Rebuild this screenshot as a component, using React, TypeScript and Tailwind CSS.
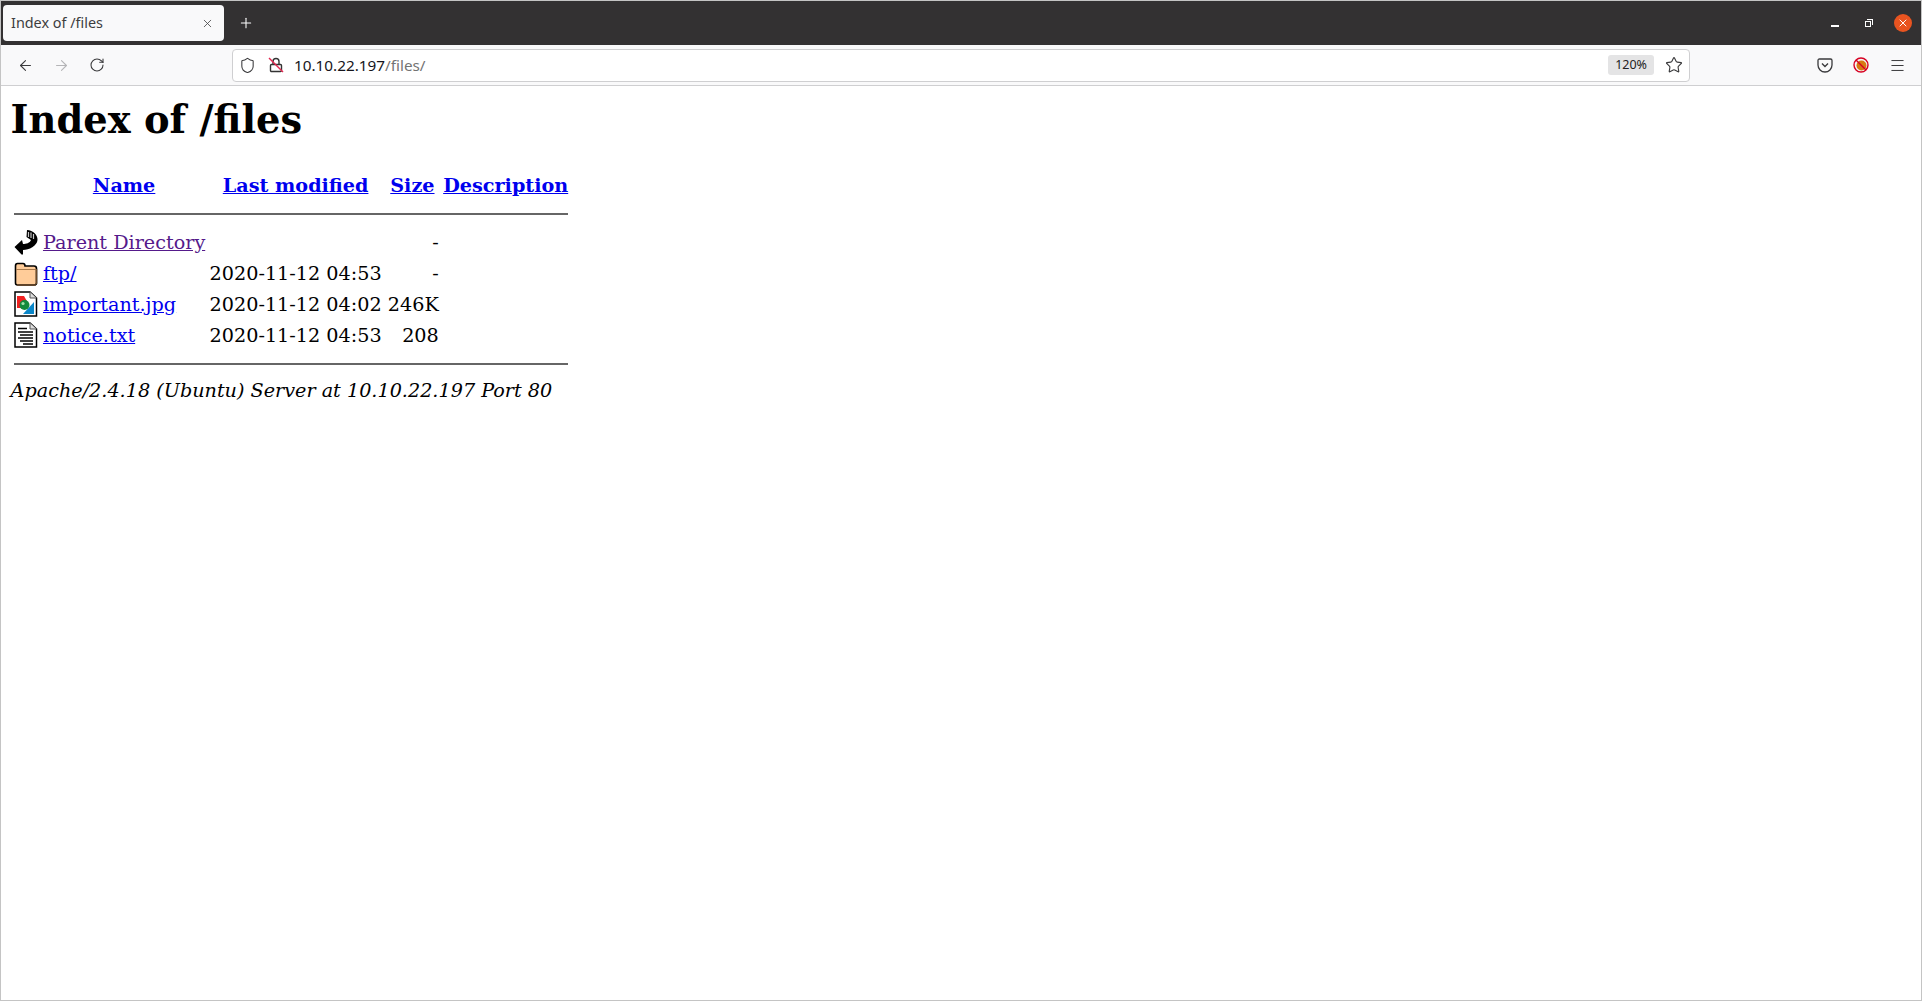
import { ArrowLeft, ArrowRight, RotateCw, Plus, X, Star, Menu, Shield } from "lucide-react";

const rows = [
  { icon: "back", name: "Parent Directory", modified: "", size: "-", visited: true },
  { icon: "folder", name: "ftp/", modified: "2020-11-12 04:53", size: "-" },
  { icon: "image", name: "important.jpg", modified: "2020-11-12 04:02", size: "246K" },
  { icon: "text", name: "notice.txt", modified: "2020-11-12 04:53", size: "208" },
];

function FileIcon({ kind }: { kind: string }) {
  if (kind === "back") {
    return (
      <svg width="24" height="26" viewBox="0 0 24 26" className="block">
        <path d="M0.5 18 L8 11 L9 15 C12 15 16 14 17 11 L12.5 8 L13 1 C19 1.5 24 6 23.5 11 C23 17 15 21 9 21 L9 25.5 L7.5 25.5 Z" fill="#000" />
        <path d="M14.5 3 L14.5 8 M17 3.5 L17 9 M19.5 5 L19.5 10" stroke="#c8c8c8" strokeWidth="1.2" />
      </svg>
    );
  }
  if (kind === "folder") {
    return (
      <svg width="24" height="26" viewBox="0 0 24 26" className="block">
        <path d="M1.5 6 Q1.5 3.5 3.5 3.5 H9 Q11 3.5 11 6 H20 Q22.5 6 22.5 8.5 V23 Q22.5 25 20 25 H3.5 Q1.5 25 1.5 23 Z" fill="#ffcc99" stroke="#000" strokeWidth="1.6" />
        <path d="M2 9.5 H22" stroke="#a87a4c" strokeWidth="1" />
        <path d="M22.5 9 V24 M3 25 H22" stroke="#6b4a2a" strokeWidth="1.4" />
      </svg>
    );
  }
  const page = (
    <>
      <path d="M1 1 H16 L22.5 7 V25 H1 Z" fill="#fff" stroke="#000" strokeWidth="1.5" />
      <path d="M16 1 V7 H22.5" fill="#ddd" stroke="#555" strokeWidth="1" />
    </>
  );
  if (kind === "image") {
    return (
      <svg width="24" height="26" viewBox="0 0 24 26" className="block">
        {page}
        <path d="M3 5 H10 L14 12 L8 17 H3 Z" fill="#f02020" />
        <path d="M20 11 V23 H9 Z" fill="#0a86c8" />
        <circle cx="10.5" cy="14" r="5" fill="#128a3c" />
        <circle cx="9" cy="12.5" r="1.6" fill="#9fe0a8" />
      </svg>
    );
  }
  return (
    <svg width="24" height="26" viewBox="0 0 24 26" className="block">
      {page}
      <path d="M4 6.5 H13 M4 10 H19 M6 13 H19 M4 16 H19 M6 19 H19 M9 22 H19" stroke="#000" strokeWidth="1.6" />
    </svg>
  );
}

export default function App() {
  return (
    <div className="w-[1922px] h-[1001px] overflow-hidden flex flex-col bg-white border border-[#c4c4c4] font-['Noto_Sans',sans-serif]">
      {/* title bar */}
      <div className="h-[44px] shrink-0 bg-[#333132] flex items-center pl-[2px] pr-[9px]">
        <div className="w-[221px] h-[36px] rounded-[4px] bg-[#f9f9fa] flex items-center pl-[8px] pr-[10px] text-[14.4px] text-[#3d3d3f]">
          <span className="flex-1">Index of /files</span>
          <X size={13} strokeWidth={1.5} className="text-[#444]" />
        </div>
        <div className="w-[44px] flex justify-center">
          <Plus size={16} strokeWidth={1.6} className="text-white" />
        </div>
        <div className="ml-auto flex items-center">
          <div className="w-[8px] h-[1.5px] bg-white mt-[6px]"></div>
          <div className="relative w-[6px] h-[6px] border border-white ml-[26px] mt-[1px]">
            <div className="absolute -top-[3px] -right-[3px] w-[6px] h-[6px] border-t border-r border-white"></div>
          </div>
          <div className="w-[18px] h-[18px] rounded-full bg-[#e95420] flex items-center justify-center ml-[23px]">
            <X size={12} strokeWidth={2} className="text-white" />
          </div>
        </div>
      </div>

      {/* toolbar */}
      <div className="h-[41px] shrink-0 bg-[#f9f9fa] border-b border-[#cfcfd1] flex items-center">
        <div className="w-[231px] flex items-center pl-[16px] gap-[19px]">
          <ArrowLeft size={17} strokeWidth={1.5} className="text-[#3a3a3c]" />
          <ArrowRight size={17} strokeWidth={1.5} className="text-[#b5b5b7]" />
          <RotateCw size={16} strokeWidth={1.6} className="text-[#3a3a3c]" />
        </div>
        <div className="w-[1458px] h-[33px] rounded-[4px] bg-white border border-[#cfcfd1] flex items-center pl-[6px] pr-[6px]">
          <Shield size={17} strokeWidth={1.5} className="text-[#3a3a3c]" />
          <svg width="16" height="16" viewBox="0 0 16 16" className="ml-[12px]">
            <path d="M5 7 V4.5 a3 3 0 0 1 6 0 V7" fill="none" stroke="#333" strokeWidth="1.4" />
            <rect x="2.5" y="7.5" width="11" height="7" rx="1" fill="none" stroke="#333" strokeWidth="1.4" />
            <path d="M1 1 L15 15" stroke="#e22850" strokeWidth="1.4" />
          </svg>
          <div className="ml-[10px] text-[15.3px] text-[#15141a]">
            10.10.22.197<span className="text-[#737373]">/files/</span>
          </div>
          <div className="ml-auto h-[20px] px-[7px] rounded-[3px] bg-[#e4e4e5] text-[12.5px] leading-[20px] text-[#222]">120%</div>
          <Star size={18} strokeWidth={1.5} className="ml-[11px] text-[#3a3a3c]" />
        </div>
        <div className="flex-1 flex items-center justify-end pr-[15px]">
          <svg width="16" height="15" viewBox="0 0 16 15">
            <path d="M2.5 1 H13.5 Q15 1 15 2.5 V7 A7 7 0 0 1 1 7 V2.5 Q1 1 2.5 1 Z" fill="none" stroke="#3a3a3c" strokeWidth="1.3" />
            <path d="M5 5.5 L8 8.5 L11 5.5" fill="none" stroke="#3a3a3c" strokeWidth="1.4" />
          </svg>
          <svg width="16" height="16" viewBox="0 0 16 16" className="ml-[20px]">
            <circle cx="8" cy="8" r="7" fill="#f6f6f6" stroke="#d70022" strokeWidth="1.4" />
            <circle cx="8.5" cy="8.5" r="5" fill="#d77a12" />
            <path d="M3 3 L13 13" stroke="#d70022" strokeWidth="1.4" />
          </svg>
          <Menu size={17} strokeWidth={1.4} className="ml-[20px] text-[#3a3a3c]" />
        </div>
      </div>

      {/* page */}
      <div className="flex-1 p-[9.6px] font-['DejaVu_Serif',serif] text-[19.2px] leading-normal text-black">
        <h1 className="text-[38.4px] font-bold leading-[45px] mt-[1px] mb-[27px]">Index of /files</h1>
        <table className="border-separate border-spacing-[2.4px] leading-normal">
          <tbody>
            <tr>
              <th className="p-[1.2px]"></th>
              <th className="p-[1.2px] font-bold text-center"><a className="text-[#0000ee] underline">Name</a></th>
              <th className="p-[1.2px] font-bold text-center"><a className="text-[#0000ee] underline">Last modified</a></th>
              <th className="p-[1.2px] font-bold text-center"><a className="text-[#0000ee] underline">Size</a></th>
              <th className="p-[1.2px] font-bold text-center"><a className="text-[#0000ee] underline">Description</a></th>
            </tr>
            <tr>
              <th colSpan={5} className="p-[1.2px]"><hr className="mt-[8px] mb-[11px] border-t-2 border-[#666]" /></th>
            </tr>
            {rows.map((r) => (
              <tr key={r.name}>
                <td className="px-[1.2px] pr-[2px] py-0 align-top"><FileIcon kind={r.icon} /></td>
                <td className="px-[1.2px] py-0 align-top">
                  <a className={r.visited ? "text-[#551a8b] underline" : "text-[#0000ee] underline"}>{r.name}</a>
                </td>
                <td className="px-[1.2px] py-0 align-top text-right">{r.modified}</td>
                <td className="px-[1.2px] pl-[3px] py-0 align-top text-right">{r.size}</td>
                <td className="px-[1.2px] py-0 align-top"></td>
              </tr>
            ))}
            <tr>
              <th colSpan={5} className="p-[1.2px]"><hr className="my-[9.6px] border-t-2 border-[#666]" /></th>
            </tr>
          </tbody>
        </table>
        <address className="italic mt-[-1px]">Apache/2.4.18 (Ubuntu) Server at 10.10.22.197 Port 80</address>
      </div>
    </div>
  );
}
